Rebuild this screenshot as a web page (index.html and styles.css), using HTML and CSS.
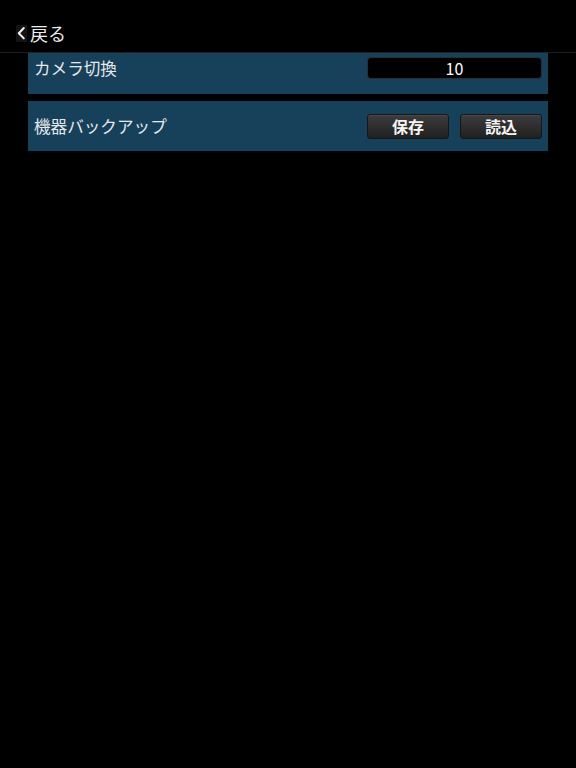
FILE: index.html
```html
<!DOCTYPE html>
<html lang="ja">
<head>
<meta charset="utf-8">
<title>設定</title>
<link rel="stylesheet" href="styles.css">
</head>
<body>
<header class="nav">
  <a class="back">
    <span class="chev"><svg width="11" height="17" viewBox="0 0 11 17"><path d="M7.8 3 L2.8 8.2 L7.8 13.4" fill="none" stroke="#f2f2f2" stroke-width="2" stroke-linecap="round" stroke-linejoin="round"/></svg></span><span class="back-text">戻る</span>
  </a>
</header>
<main class="list">
  <div class="row row-first">
    <span class="label">カメラ切換</span>
    <div class="field">10</div>
  </div>
  <div class="row row-backup">
    <span class="label">機器バックアップ</span>
    <div class="btns">
      <button class="btn">保存</button>
      <button class="btn">読込</button>
    </div>
  </div>
</main>
</body>
</html>
```
FILE: styles.css
```css
html, body {
  margin: 0;
  padding: 0;
  background: #000;
  height: 100%;
}
body {
  font-family: "Noto Sans CJK JP", "Noto Sans", sans-serif;
  color: #e8e8e8;
}
.nav {
  height: 52px;
  border-bottom: 1px solid #1f1f1f;
  display: flex;
  align-items: flex-start;
  box-sizing: content-box;
}
.back {
  display: flex;
  align-items: center;
  padding-left: 16px;
  padding-top: 24px;
}
.chev {
  display: flex;
  width: 11px;
  height: 17px;
  background: #141414;
}
.back-text {
  font-size: 18px;
  line-height: 18px;
  color: #ececec;
  margin-left: 3px;
}
.list {
  padding: 0 28px;
  display: flex;
  flex-direction: column;
  gap: 7px;
}
.row {
  background: #17405a;
  display: flex;
  align-items: center;
  justify-content: space-between;
  padding: 0 6px 0 6px;
  box-sizing: border-box;
}
.row-first {
  height: 41px;
  align-items: flex-start;
  padding-top: 4px;
}
.row-first .label {
  line-height: 22px;
}
.row-backup {
  height: 50px;
}
.label {
  font-size: 16.6px;
  color: #e6e8ea;
}
.field {
  width: 175px;
  height: 22px;
  box-sizing: border-box;
  background: #000;
  border: 1px solid #2a2f33;
  border-radius: 4px;
  color: #fff;
  font-size: 16px;
  line-height: 20px;
  text-align: center;
}
.btns {
  display: flex;
  gap: 11px;
}
.btn {
  width: 82px;
  height: 25px;
  box-sizing: border-box;
  border: 1px solid #161616;
  border-radius: 3px;
  background: linear-gradient(#3c3c3c, #202020);
  color: #f4f4f4;
  font-family: "Noto Sans CJK JP", sans-serif;
  font-weight: bold;
  font-size: 16px;
  line-height: 22px;
  padding: 0;
  box-shadow: inset 0 1px 0 rgba(255,255,255,0.08);
}
```
